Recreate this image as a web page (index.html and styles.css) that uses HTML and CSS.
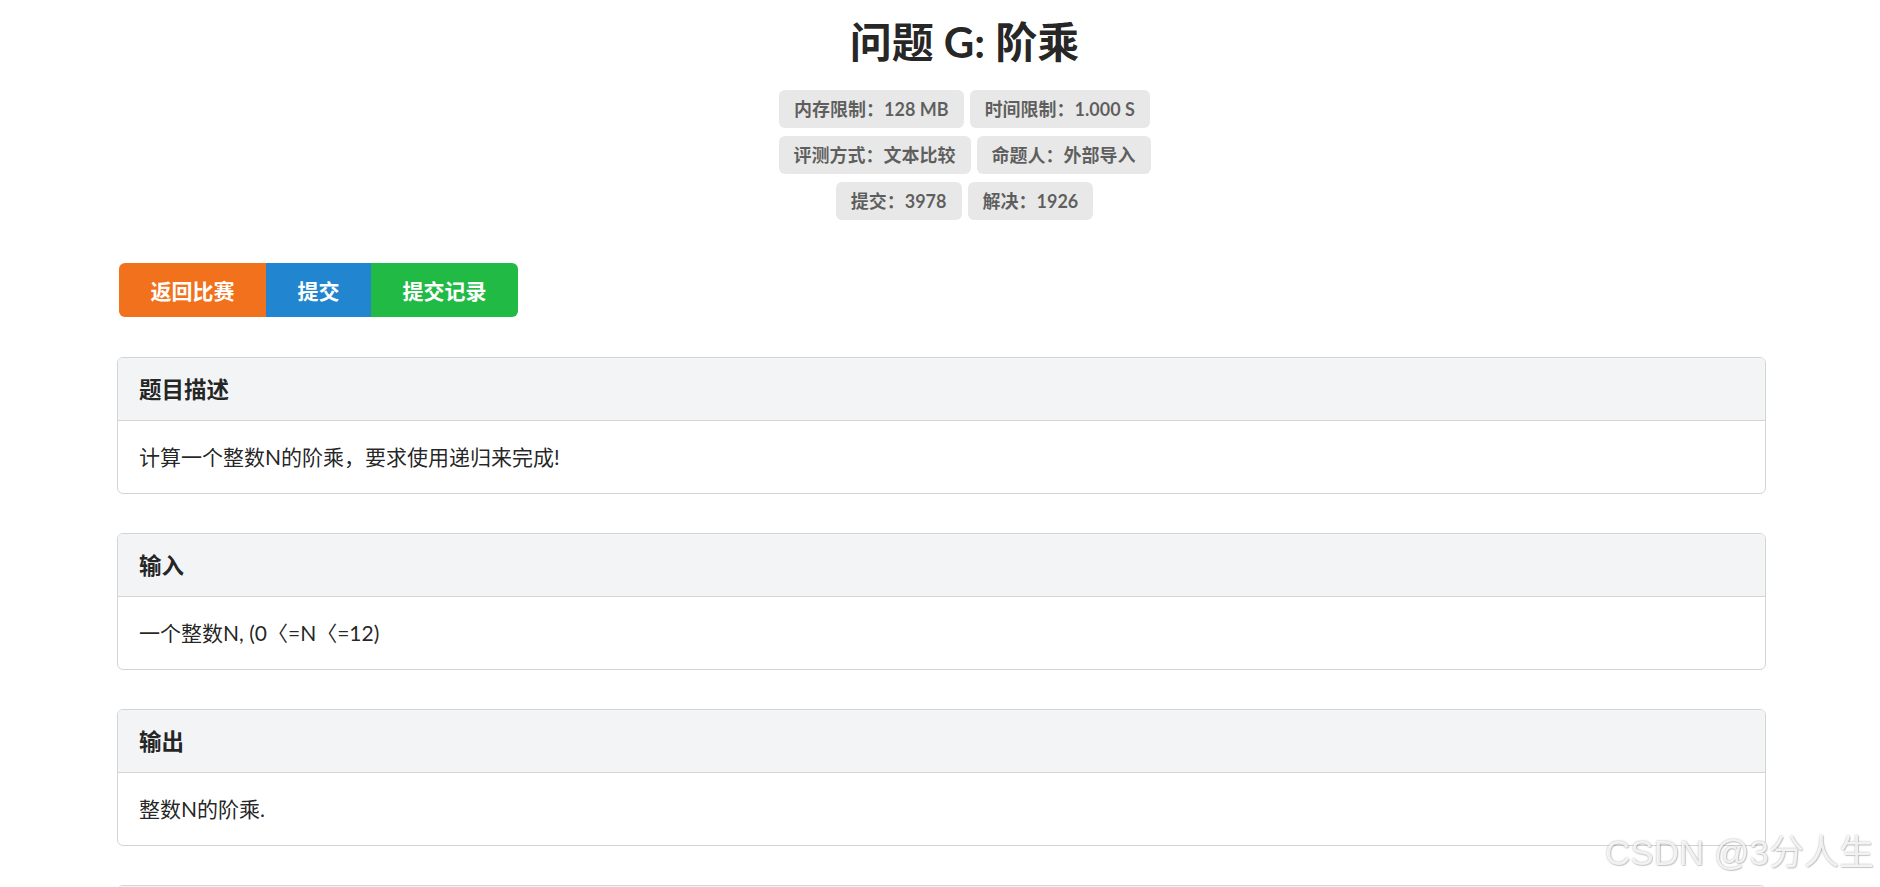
FILE: index.html
```html
<!DOCTYPE html>
<html lang="zh-CN">

<head>
    <meta charset="UTF-8">
    <meta name="viewport" content="width=device-width, initial-scale=1.0">
    <title>问题 G: 阶乘</title>
    <link rel="stylesheet" href="styles.css">
</head>

<body>
    <div class="container">
        <div class="problem-head">
            <h1 class="title">问题 G: 阶乘</h1>
            <div class="label-row">
                <span class="label">内存限制：128 MB</span>
                <span class="label">时间限制：1.000 S</span>
            </div>
            <div class="label-row">
                <span class="label">评测方式：文本比较</span>
                <span class="label">命题人：外部导入</span>
            </div>
            <div class="label-row">
                <span class="label">提交：3978</span>
                <span class="label">解决：1926</span>
            </div>
        </div>

        <div class="btn-group">
            <a class="btn orange" href="#">返回比赛</a>
            <a class="btn blue" href="#">提交</a>
            <a class="btn green" href="#">提交记录</a>
        </div>

        <div class="section">
            <div class="section-head">题目描述</div>
            <div class="section-body">计算一个整数N的阶乘，要求使用递归来完成!</div>
        </div>

        <div class="section">
            <div class="section-head">输入</div>
            <div class="section-body">一个整数N, (0〈=N〈=12)</div>
        </div>

        <div class="section">
            <div class="section-head">输出</div>
            <div class="section-body">整数N的阶乘.</div>
        </div>

        <!-- next section starts just below the fold -->
        <div class="section">
            <div class="section-head empty"></div>
        </div>
    </div>

    <div class="watermark">CSDN @3分人生</div>
</body>

</html>
```

FILE: styles.css
```css
* {
    margin: 0;
    padding: 0;
    box-sizing: border-box;
}

body {
    background: #fff;
    font-family: Lato, "Noto Sans CJK SC", sans-serif;
    color: rgba(0, 0, 0, 0.87);
    font-size: 21px;
    line-height: 30px;
}

.container {
    width: 1649px;
    margin-left: 117px;
}

/* header: title + labels */
.problem-head {
    padding-left: 46px;
    padding-top: 15px;
    display: flex;
    flex-direction: column;
    align-items: center;
    gap: 8px;
}

.title {
    font-size: 42px;
    line-height: 54px;
    font-weight: 700;
    margin-bottom: 13px;
}

.label-row {
    display: flex;
    gap: 6px;
}

.label {
    display: inline-block;
    background: #e8e8e8;
    color: rgba(0, 0, 0, 0.6);
    font-size: 18px;
    line-height: 18px;
    font-weight: 700;
    padding: 10px 15px;
    border-radius: 6px;
}

/* buttons */
.btn-group {
    display: inline-flex;
    margin: 43px 0 40px 2px;
    border-radius: 6px;
    overflow: hidden;
}

.btn {
    display: block;
    color: #fff;
    text-decoration: none;
    font-size: 21px;
    line-height: 21px;
    font-weight: 700;
    padding: 16.5px 31.5px;
}

.orange {
    background: #f2711c;
}

.blue {
    background: #2185d0;
}

.green {
    background: #21ba45;
}

/* sections */
.section {
    border: 1px solid #d4d4d5;
    border-radius: 6px;
    margin-bottom: 39px;
    overflow: hidden;
}

.section-head {
    background: #f3f4f5;
    border-bottom: 1px solid #d4d4d5;
    padding: 16.5px 21px;
    font-size: 22.5px;
    line-height: 29px;
    font-weight: 700;
}

.section-head.empty {
    height: 63px;
}

.section-body {
    padding: 21px;
}

.watermark {
    position: fixed;
    right: 6px;
    bottom: 15px;
    font-family: "Liberation Sans", "Noto Sans CJK SC", sans-serif;
    font-size: 35px;
    line-height: 38px;
    color: rgba(255, 255, 255, 0.85);
    text-shadow: 0 0 2px rgba(0, 0, 0, 0.35), 1px 1px 1px rgba(0, 0, 0, 0.15);
}
```
